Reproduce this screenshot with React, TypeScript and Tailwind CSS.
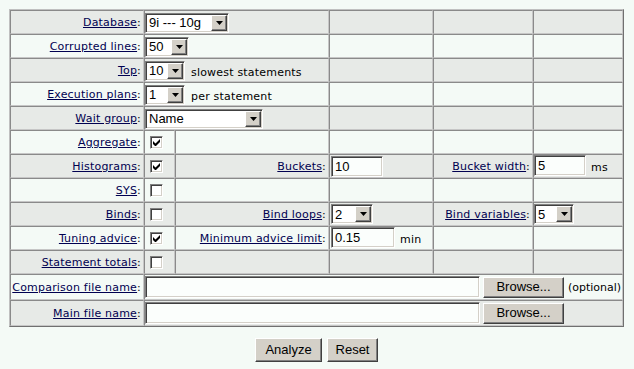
import React from "react";
import clsx from "clsx";

const small = "font-['DejaVu_Sans',sans-serif] text-[11px] tracking-[0.2px] text-black";
const ctrl = "font-['Liberation_Sans',Arial,sans-serif] text-[13px] text-black";
const sunken =
  "border border-t-[#808080] border-l-[#808080] border-b-white border-r-white shadow-[inset_1px_1px_0_#404040,inset_-1px_-1px_0_#d4d0c8]";
const raised =
  "border border-t-white border-l-white border-b-[#404040] border-r-[#404040] shadow-[inset_-1px_-1px_0_#808080] bg-[#d4d0c8]";

function Cell({
  shade,
  className,
  children,
}: {
  shade?: boolean;
  className?: string;
  children?: React.ReactNode;
}) {
  return (
    <div
      className={clsx(
        "flex items-center border border-t-[#8a8a8a] border-l-[#8a8a8a] border-b-[#c6c6c6] border-r-[#c6c6c6]",
        shade ? "bg-[#e7eae7]" : "bg-[#f4faf6]",
        className
      )}
    >
      {children}
    </div>
  );
}

function Label({ text, shade }: { text: string; shade?: boolean }) {
  return (
    <Cell shade={shade} className="justify-end pr-[2px] pt-[2px]">
      <span className={small}>
        <span className="text-[#000050] underline">{text}</span>:
      </span>
    </Cell>
  );
}

function Select({ value, className }: { value: string; className: string }) {
  return (
    <div className={clsx("flex h-[20px] items-center bg-white", sunken, className)}>
      <span className={clsx(ctrl, "flex-1 pl-[3px] leading-none")}>{value}</span>
      <div className={clsx("mr-[1px] flex h-[16px] w-[16px] items-center justify-center", raised)}>
        <svg width="7" height="4" viewBox="0 0 7 4">
          <path d="M0 0h7L3.5 4z" fill="#000" />
        </svg>
      </div>
    </div>
  );
}

function Check({ on }: { on?: boolean }) {
  return (
    <div className={clsx("ml-[5px] flex h-[13px] w-[13px] items-center justify-center bg-white", sunken)}>
      {on && (
        <svg width="7" height="7" viewBox="0 0 7 7">
          <path d="M0 2v3l2 2h1l4-4V0L2.5 4.5z" fill="#000" />
        </svg>
      )}
    </div>
  );
}

function TextBox({ value, className }: { value?: string; className: string }) {
  return (
    <div className={clsx("flex h-[21px] items-center bg-[#fbfefc] pl-[3px]", sunken, className)}>
      <span className={clsx(ctrl, "leading-none")}>{value}</span>
    </div>
  );
}

function Button({ text, className }: { text: string; className: string }) {
  return (
    <div className={clsx("flex items-center justify-center", raised, ctrl, className)}>{text}</div>
  );
}

export default function App() {
  const selectRows: [string, string, string, string?][] = [
    ["Database", "9i --- 10g", "w-[84px]"],
    ["Corrupted lines", "50", "w-[44px]"],
    ["Top", "10", "w-[40px]", "slowest statements"],
    ["Execution plans", "1", "w-[40px]", "per statement"],
    ["Wait group", "Name", "w-[118px]"],
  ];

  return (
    <div className="min-h-[369px] bg-[#f4faf6] pl-[9px] pt-[9px]">
      <div className="grid w-[615px] grid-cols-[134px_31px_154px_104px_100px_90px] grid-rows-[repeat(11,24px)_26px_26px] border border-t-[#c0c0c0] border-l-[#c0c0c0] border-b-[#707070] border-r-[#707070]">
        {selectRows.map(([label, value, w, note], i) => {
          const shade = i % 2 === 0;
          return (
            <React.Fragment key={label}>
              <Label text={label} shade={shade} />
              <Cell shade={shade} className="col-span-2 items-baseline pt-[1px]">
                <Select value={value} className={w} />
                {note && <span className={clsx(small, "ml-[6px] mt-[6px]")}>{note}</span>}
              </Cell>
              <Cell shade={shade} />
              <Cell shade={shade} />
              <Cell shade={shade} />
            </React.Fragment>
          );
        })}

        {/* Aggregate */}
        <Label text="Aggregate" />
        <Cell><Check on /></Cell>
        <Cell />
        <Cell />
        <Cell />
        <Cell />

        {/* Histograms */}
        <Label text="Histograms" shade />
        <Cell shade><Check on /></Cell>
        <Label text="Buckets" shade />
        <Cell shade className="pl-[1px]"><TextBox value="10" className="w-[52px]" /></Cell>
        <Label text="Bucket width" shade />
        <Cell shade className="items-end pl-[0px]">
          <TextBox value="5" className="mb-[1px] w-[52px]" />
          <span className={clsx(small, "ml-[5px] mb-[1px]")}>ms</span>
        </Cell>

        {/* SYS */}
        <Label text="SYS" />
        <Cell><Check /></Cell>
        <Cell />
        <Cell />
        <Cell />
        <Cell />

        {/* Binds */}
        <Label text="Binds" shade />
        <Cell shade><Check /></Cell>
        <Label text="Bind loops" shade />
        <Cell shade className="pl-[1px]"><Select value="2" className="w-[42px]" /></Cell>
        <Label text="Bind variables" shade />
        <Cell shade><Select value="5" className="w-[40px]" /></Cell>

        {/* Tuning advice */}
        <Label text="Tuning advice" />
        <Cell><Check on /></Cell>
        <Label text="Minimum advice limit" />
        <Cell className="items-end pl-[1px]">
          <TextBox value="0.15" className="mb-[1px] w-[64px]" />
          <span className={clsx(small, "ml-[5px] mb-[1px]")}>min</span>
        </Cell>
        <Cell />
        <Cell />

        {/* Statement totals */}
        <Label text="Statement totals" shade />
        <Cell shade><Check /></Cell>
        <Cell shade />
        <Cell shade />
        <Cell shade />
        <Cell shade />

        {/* Comparison file */}
        <Label text="Comparison file name" />
        <Cell className="col-span-5 gap-[3px]">
          <TextBox className="h-[22px] w-[335px]" />
          <Button text="Browse..." className="h-[21px] w-[81px]" />
          <span className={clsx(small, "ml-[1px] mt-[3px] tracking-normal")}>(optional)</span>
        </Cell>

        {/* Main file */}
        <Label text="Main file name" shade />
        <Cell shade className="col-span-5 gap-[3px]">
          <TextBox className="h-[22px] w-[335px]" />
          <Button text="Browse..." className="h-[21px] w-[81px]" />
        </Cell>
      </div>

      <div className="mt-[11px] flex w-[615px] justify-center gap-[5px]">
        <Button text="Analyze" className="h-[24px] w-[67px]" />
        <Button text="Reset" className="h-[24px] w-[51px]" />
      </div>
    </div>
  );
}
